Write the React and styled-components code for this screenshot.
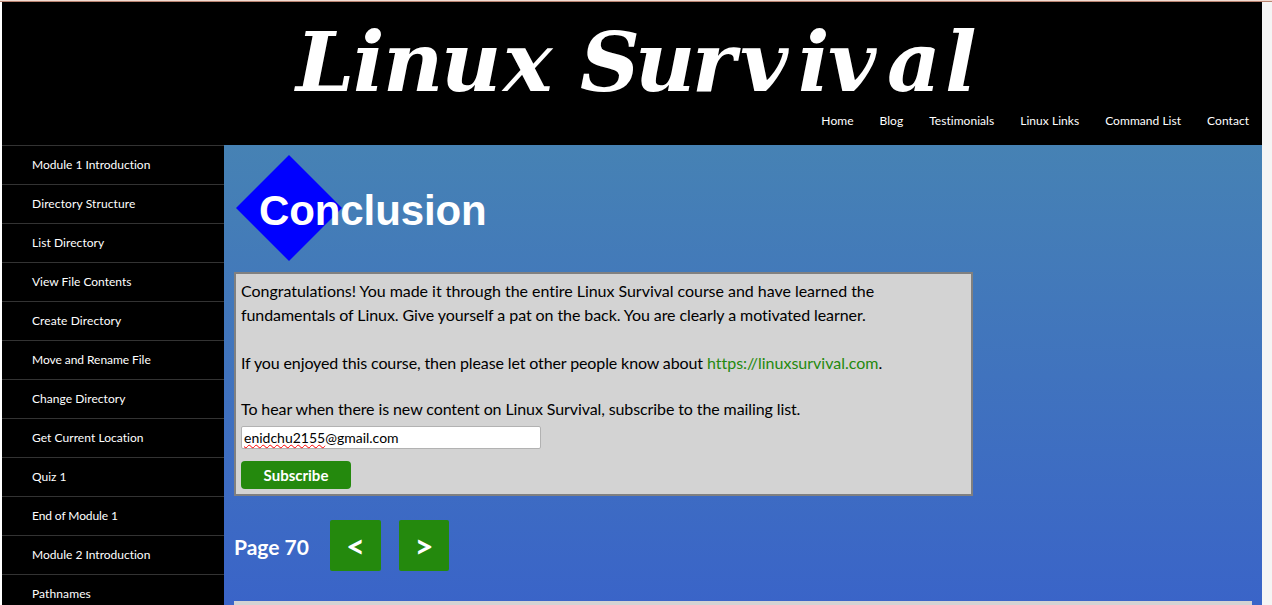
import React from 'react';
import styled, { createGlobalStyle } from 'styled-components';

const GlobalStyle = createGlobalStyle`
  * { box-sizing: border-box; }
  body {
    margin: 0;
    background: #f5f5f5;
    overflow: hidden;
    font-family: Lato, sans-serif;
    font-variant-ligatures: none;
    color: #000;
  }
`;

const Window = styled.div`
  height: 605px;
  display: flex;
  flex-direction: column;
  overflow: hidden;
`;
const TopEdge = styled.div`
  flex: none;
  height: 2px;
  background: #f2dcd2;
  border-bottom: 1px solid #b98370;
`;
const Page = styled.div`
  flex: 1;
  min-height: 0;
  width: 1262px;
  border-left: 2px solid #fff;
  display: flex;
  flex-direction: column;
`;
const Header = styled.header`
  flex: none;
  height: 143px;
  background: #000;
  display: flex;
  flex-direction: column;
`;
const Logo = styled.svg`
  display: block;
  flex: none;
  width: 1260px;
  height: 95px;
  overflow: visible;
`;
const LogoText = styled.text`
  font-family: 'DejaVu Serif', serif;
  font-style: italic;
  font-weight: 700;
  font-size: 83px;
  fill: #fff;
`;
const TopNav = styled.nav`
  display: flex;
  justify-content: flex-end;
  gap: 26px;
  padding: 15px 13px 0 0;
`;
const NavLink = styled.a`
  font-size: 12px;
  line-height: 18px;
  letter-spacing: 0.04px;
  color: #fff;
  white-space: nowrap;
`;
const Body = styled.div`
  flex: 1;
  min-height: 0;
  display: flex;
`;
const Sidebar = styled.aside`
  flex: none;
  width: 222px;
  background: #000;
  overflow: hidden;
`;
const SideItem = styled.a`
  display: block;
  height: 39px;
  border-top: 1px solid #333;
  padding-left: 30px;
  font-size: 12px;
  line-height: 38px;
  letter-spacing: ${(p) => p.$track}px;
  color: #fff;
`;
const Content = styled.main`
  flex: 1;
  min-width: 0;
  padding: 10px 10px 0;
  overflow: hidden;
  background: linear-gradient(#4682b4 0%, #3a64c8 100%);
`;
const Heading = styled.div`
  display: flex;
  align-items: center;
  height: 106px;
  padding-left: 2px;
`;
const Diamond = styled.div`
  flex: none;
  width: 106px;
  height: 106px;
  background: #00f;
  clip-path: polygon(50% 0, 100% 50%, 50% 100%, 0 50%);
`;
const Title = styled.h1`
  margin: 5px 0 0 -83px;
  position: relative;
  font: 700 42px/48px 'Liberation Sans', Arial, sans-serif;
  letter-spacing: -0.1px;
  color: #fff;
`;
const Panel = styled.section`
  width: 739px;
  height: 224px;
  margin-top: 11px;
  padding: 5px 5px 0;
  border: 2px solid #808080;
  background: #d3d3d3;
`;
const Paragraph = styled.p`
  margin: 0 0 ${(p) => p.$gap}px;
  font-size: 16px;
  line-height: 24px;
  white-space: nowrap;
`;
const Line = styled.span`
  display: block;
  letter-spacing: ${(p) => p.$track}px;
`;
const Link = styled.a`
  color: #24890d;
  letter-spacing: 0;
`;
const EmailBox = styled.div`
  width: 300px;
  height: 23px;
  padding-left: 2px;
  border: 1px solid #b2b2b2;
  border-radius: 2px;
  background: #fff;
  font-size: 14px;
  line-height: 21px;
`;
const Misspelled = styled.span`
  text-decoration: underline wavy #f00 1px;
  text-decoration-skip-ink: none;
  text-underline-offset: 1px;
`;
const Subscribe = styled.button`
  display: block;
  width: 110px;
  height: 28px;
  margin-top: 12px;
  padding: 0;
  border: 0;
  border-radius: 4px;
  background: #24890d;
  color: #fff;
  font: 700 15px/28px Lato, sans-serif;
`;
const Pager = styled.div`
  display: flex;
  align-items: center;
  height: 52px;
  margin-top: 24px;
`;
const PageLabel = styled.span`
  width: 96px;
  font-size: 21px;
  font-weight: 700;
  color: #fff;
`;
const PageButton = styled.button`
  width: ${(p) => p.$width}px;
  height: 51px;
  margin: 0 18px 1px 0;
  padding: 0;
  border: 0;
  border-radius: 2px;
  background: #24890d;
  color: #fff;
  font: 700 33px/49px Lato, sans-serif;
`;
const Footer = styled.div`
  height: 20px;
  margin-top: 29px;
  background: #d3d3d3;
`;

const LOGO_STRETCH = 1;
const letters = (xs) => xs.map((x) => x / LOGO_STRETCH).join(' ');

const nav = ['Home', 'Blog', 'Testimonials', 'Linux Links', 'Command List', 'Contact'];
const lessons = [
  ['Module 1 Introduction', 0],
  ['Directory Structure', 0.12],
  ['List Directory', 0.07],
  ['View File Contents', 0],
  ['Create Directory', 0.1],
  ['Move and Rename File', -0.05],
  ['Change Directory', 0.05],
  ['Get Current Location', 0.05],
  ['Quiz 1', 0],
  ['End of Module 1', -0.1],
  ['Module 2 Introduction', 0],
  ['Pathnames', 0.1],
];

export default function App() {
  return (
    <Window>
      <GlobalStyle />
      <TopEdge />
      <Page>
        <Header>
          <Logo viewBox="0 0 1260 95" role="img" aria-label="Linux Survival">
            <LogoText
              y="89"
              transform={`scale(${LOGO_STRETCH} 1)`}
              x={letters([294, 351, 381, 439, 501, 560, 578, 633, 690, 738, 796, 826, 885, 943])}
            >
              Linux Survival
            </LogoText>
          </Logo>
          <TopNav>
            {nav.map((label) => <NavLink key={label}>{label}</NavLink>)}
          </TopNav>
        </Header>
        <Body>
          <Sidebar>
            {lessons.map(([label, track]) => <SideItem key={label} $track={track}>{label}</SideItem>)}
          </Sidebar>
          <Content>
            <Heading>
              <Diamond />
              <Title>Conclusion</Title>
            </Heading>
            <Panel>
              <Paragraph $gap={24}>
                <Line $track={-0.03}>
                  Congratulations! You made it through the entire Linux Survival course and have learned the
                </Line>
                <Line $track={-0.08}>
                  fundamentals of Linux. Give yourself a pat on the back. You are clearly a motivated learner.
                </Line>
              </Paragraph>
              <Paragraph $gap={22}>
                <Line $track={-0.12}>
                  If you enjoyed this course, then please let other people know about{' '}
                  <Link>https://linuxsurvival.com</Link>.
                </Line>
              </Paragraph>
              <Paragraph $gap={5}>
                <Line $track={-0.1}>
                  To hear when there is new content on Linux Survival, subscribe to the mailing list.
                </Line>
              </Paragraph>
              <EmailBox><Misspelled>enidchu2155</Misspelled>@gmail.com</EmailBox>
              <Subscribe>Subscribe</Subscribe>
            </Panel>
            <Pager>
              <PageLabel>Page 70</PageLabel>
              <PageButton $width={51}>&lt;</PageButton>
              <PageButton $width={50}>&gt;</PageButton>
            </Pager>
            <Footer />
          </Content>
        </Body>
      </Page>
    </Window>
  );
}
